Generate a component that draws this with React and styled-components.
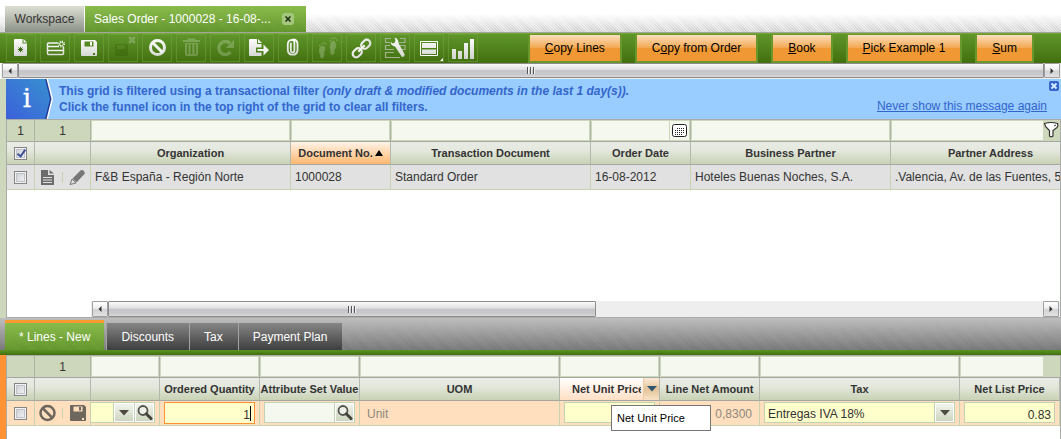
import React from "react";
import styled, { createGlobalStyle, css } from "styled-components";

const GlobalStyle = createGlobalStyle`
  *, *::before, *::after { box-sizing: border-box; }
  body { margin: 0; background: #fff; }
  body, button, input, select { font-family: "Liberation Sans", Arial, sans-serif; font-size: 12px; }
  button, input, select { margin: 0; padding: 0; border: 0; border-radius: 0; color: inherit; }
`;

const hatch = (a, b) => `repeating-linear-gradient(45deg, ${a} 0 1px, ${b} 1px 2px)`;

const Page = styled.div`
  display: flex;
  flex-direction: column;
  min-height: 100vh;
  overflow: hidden;
  color: #333;
`;

/* ---------- window tabs ---------- */
const WindowTabs = styled.nav`
  display: flex;
  align-items: flex-end;
  gap: 1px;
  height: 33px;
  padding-left: 5px;
  border-bottom: 1px solid #a0a4a4;
  background: linear-gradient(#fff 14px, rgba(255, 255, 255, 0.3)), ${hatch("#b8b8b8", "#dcdcdc")};
`;

const WorkspaceTab = styled.button`
  height: 26px;
  width: 79px;
  background: linear-gradient(#dcdfd4, #8d9288);
  color: #333;
`;

const greenTab = `linear-gradient(rgba(139, 189, 76, 0.95), rgba(96, 146, 42, 0.7)), ${hatch("#659738", "#7aae42")}`;

const DocumentTab = styled.div`
  display: flex;
  align-items: center;
  justify-content: space-between;
  height: 26px;
  width: 221px;
  padding: 0 12px 0 9px;
  background: ${greenTab};
  color: #fff;
`;

const TabClose = styled.button`
  display: grid;
  place-items: center;
  width: 12px;
  height: 12px;
  border-radius: 3px;
  background: #a4c77d;
  color: #1c2b0c;
`;

/* ---------- toolbar ---------- */
const Toolbar = styled.div`
  display: flex;
  height: 30px;
  padding: 0 27px 0 6px;
  border-top: 1px solid #78a82c;
  background: linear-gradient(#5f962b, #426f0e);
`;

const IconGroup = styled.div`
  display: flex;
  gap: 4px;
`;

const IconButton = styled.button`
  width: 30px;
  height: 28px;
  border: 1px solid rgba(125, 170, 70, 0.45);
  background: transparent;
  svg { display: block; margin: -1px; opacity: ${(p) => (p.disabled ? 0.22 : 1)}; }
`;

const ProcessGroup = styled.div`
  display: flex;
  gap: 13px;
  margin-left: auto;
`;

const ProcessButton = styled.button`
  height: 29px;
  padding: 0 15px;
  border: 2px solid #68982b;
  border-top-width: 1px;
  background:
    linear-gradient(rgba(255, 240, 225, 0.8), rgba(255, 215, 165, 0.25)) 0 0 / 100% 13px no-repeat,
    #ef9834;
  background-clip: padding-box;
  color: #000;
  white-space: nowrap;
`;

/* ---------- scroll bars ---------- */
const ScrollBar = styled.div`
  display: flex;
  height: 16px;
  padding: 0 1px ${(p) => (p.$grid ? 0 : 1)}px;
  margin-left: ${(p) => (p.$grid ? 84 : 1)}px;
  background: #eee;
`;

const metal = css`
  border: 1px solid #8c8c8c;
  background: linear-gradient(#fafafa, #dedee0 45%, #c6c6ca 50%, #c9c9cd 80%, #dadada);
`;

const ScrollArrow = styled.button`
  ${metal}
  display: grid;
  place-items: center;
  flex: none;
  width: 16px;
  border-color: #a0a0a0;
  border-radius: 1px;
  background: linear-gradient(#fff, #eee 45%, #d2d2d6 55%, #e2e2e2);
`;

const ScrollTrack = styled.div`
  flex: 1;
  display: flex;
`;

const ScrollThumb = styled.div`
  ${metal}
  flex: 0 0 ${(p) => p.$size};
  display: flex;
  align-items: center;
  justify-content: center;
  gap: 1px;
  border-radius: 1px;
  i { width: 2px; height: 7px; background: linear-gradient(90deg, #555 50%, #f4f4f4 50%); }
`;

/* ---------- message ---------- */
const Frame = styled.section`
  display: flex;
  flex: ${(p) => (p.$grow ? 1 : "none")};
  min-width: 0;
  border-left: 6px solid ${(p) => p.$edge};
`;

const FrameBody = styled.div`
  flex: 1;
  min-width: 0;
`;

const Message = styled.div`
  position: relative;
  display: flex;
  height: 40px;
  background: #99ccff;
  color: #3366cc;
`;

const MessageBadge = styled.svg`
  flex: none;
  display: block;
`;

const MessageText = styled.p`
  flex: 1;
  margin: 4px 0 0 6px;
  font-weight: bold;
  line-height: 16px;
  white-space: nowrap;
`;

const MessageLink = styled.a`
  align-self: flex-end;
  margin: 0 14px 5px 0;
  color: #3366cc;
  line-height: 16px;
`;

const MessageClose = styled.button`
  position: absolute;
  top: 2px;
  right: 2px;
  width: 10px;
  height: 10px;
  background: none;
  svg { display: block; }
`;

/* ---------- grids ---------- */
const GridArea = styled.div`
  position: relative;
  overflow: hidden;
  border: 1px solid #a9aca9;
  border-bottom-width: ${(p) => (p.$open ? 0 : 1)}px;
  height: ${(p) => (p.$open ? "100%" : "auto")};
`;

const GridTable = styled.table`
  table-layout: fixed;
  width: ${(p) => p.$width}px;
  border-collapse: separate;
  border-spacing: 0;
  th, td { padding: 0; overflow: hidden; white-space: nowrap; }
`;

const FilterCell = styled.td`
  height: 22px;
  border-right: 1px solid #aeb3a8;
  border-bottom: 1px solid #a4a8a0;
  background: #cdd7bb;
  text-align: center;
`;

const FilterBox = styled.div`
  display: flex;
  height: 21px;
  padding: 1px;
  gap: 1px;
`;

const FilterInput = styled.input`
  flex: 1;
  min-width: 0;
  background: #f4f8ef;
`;

const CalendarButton = styled.button`
  display: grid;
  place-items: center;
  width: 19px;
  background: #f4f8ef;
`;

const headBack = {
  plain: "linear-gradient(#e9ece6, #e3e7dc 40%, #c8d2b4)",
  sorted: "linear-gradient(#fff3e8, #ffb870)",
  hover: "linear-gradient(#fff, #ffdfc4)",
};

const HeadCell = styled.th`
  height: 23px;
  border-right: 1px solid #b4b8ae;
  border-bottom: 1px solid #a4a8a0;
  background: ${(p) => headBack[p.$kind || "plain"]};
  font-size: 11px;
  font-weight: bold;
  color: #333;
`;

const HeadLabel = styled.div`
  display: flex;
  align-items: center;
  justify-content: center;
  gap: 2px;
  height: 22px;
`;

const HeadMenu = styled.button`
  display: grid;
  place-items: center;
  flex: none;
  width: 16px;
  height: 22px;
  border-left: 1px solid #eecba6;
  background: linear-gradient(#fdebd6, #e2c39a 50%, #f8e2c6);
`;

const HoverLabel = styled.span`
  flex: 1;
  overflow: hidden;
  padding-left: 12px;
  text-align: left;
`;

const DataCell = styled.td`
  height: 25px;
  border-right: 1px solid #c6d2b2;
  border-bottom: 1px solid #c6d2b2;
  background: ${(p) => (p.$editing ? "#ffdfbd" : "#e1e1e1")};
  color: ${(p) => (p.$muted ? "#8c8880" : "#333")};
`;

const CellText = styled.div`
  padding: 0 4px;
  overflow: hidden;
`;

const CellReadOnly = styled.div`
  padding: 2px 7px 0;
  text-align: ${(p) => p.$align || "left"};
`;

const RowTools = styled.div`
  display: flex;
  align-items: center;
  justify-content: space-between;
  padding: 0 4px;
`;

const ToolButton = styled.button`
  width: 18px;
  height: 20px;
  background: none;
  svg { display: block; }
`;

const Divider = styled.span`
  width: 1px;
  height: 11px;
  background: #c6d2b2;
`;

const CheckBox = styled.input.attrs({ type: "checkbox" })`
  appearance: none;
  display: block;
  position: relative;
  width: 13px;
  height: 13px;
  margin: 1px auto 0 7px;
  border: 1px solid #858585;
  background: linear-gradient(135deg, #c6cad0, #f8f8f8);
  box-shadow: inset 0 0 0 1px #f2f2f2, inset 0 0 0 2px #bfc3c8;
  &:checked::after {
    content: "";
    position: absolute;
    left: 4px;
    top: 0;
    width: 5px;
    height: 9px;
    border: solid #3b4f96;
    border-width: 0 2px 2px 0;
    transform: rotate(35deg);
  }
`;

const Field = styled.div`
  display: flex;
  height: ${(p) => (p.$active ? 22 : 21)}px;
  margin: ${(p) => (p.$active ? "0 4px" : "0 4px 1px")};
  margin-left: ${(p) => (p.$flush ? 0 : 4)}px;
  border: 1px solid ${(p) => (p.$active ? "#ff9232" : "#c2d3b4")};
  border-left-width: ${(p) => (p.$flush ? 0 : 1)}px;
  background: ${(p) => (p.$blank ? "#f4f8ef" : "#ffffcc")};
`;

const FieldInput = styled.input`
  flex: 1;
  min-width: 0;
  padding: 4px ${(p) => (p.$typing ? 0 : 3)}px 0 3px;
  background: transparent;
  text-align: right;
  outline: 0;
`;

const Caret = styled.span`
  align-self: center;
  width: 1px;
  height: 15px;
  margin-right: 3px;
  background: #000;
`;

const FieldSelect = styled.select`
  appearance: none;
  flex: 1;
  min-width: 0;
  padding: 2px 3px 0;
  background: transparent;
  outline: 0;
`;

const FieldIcon = styled.button`
  display: grid;
  place-items: center;
  flex: none;
  width: ${(p) => (p.$wide ? 21 : 20)}px;
  border-left: 1px solid #c2d3b4;
  box-shadow: inset 0 0 0 1px #fff;
  background: linear-gradient(#f4f6f0, #cbd3bd);
`;

const FunnelCorner = styled.div`
  position: absolute;
  top: 0;
  right: 0;
  width: 17px;
  height: 21px;
  background: #cdd7bb;
`;

const FunnelButton = styled.button`
  width: 17px;
  height: 21px;
  background: none;
  svg { display: block; }
`;

const EmptyRows = styled.div`
  height: 111px;
  background: #fff;
`;

/* ---------- child tabs ---------- */
const ChildTabs = styled.nav`
  height: 37px;
  padding-bottom: 5px;
  background: linear-gradient(#5c9424, #40700c) 0 100% / 100% 5px no-repeat;
`;

const ChildTabStrip = styled.div`
  display: flex;
  align-items: flex-end;
  height: 32px;
  padding-left: 5px;
  background: linear-gradient(rgba(190, 190, 190, 1), rgba(130, 130, 130, 0.6)), ${hatch("#606060", "#7c7c7c")};
`;

const ChildTab = styled.button`
  height: 27px;
  padding: 0 15px;
  background: linear-gradient(#868686, #3e3e3e);
  box-shadow: inset 1px 0 0 #a4a4a4;
  color: #fff;
  ${(p) =>
    p.$active &&
    css`
      height: 30px;
      padding: 0 14px;
      margin-right: 2px;
      border-top: 3px solid #ff9a30;
      box-shadow: none;
      background: ${greenTab};
    `}
`;

const Tooltip = styled.div`
  position: absolute;
  left: 604px;
  top: 49px;
  width: 100px;
  height: 26px;
  padding: 0 5px;
  border: 1px solid #767676;
  background: #fff;
  color: #000;
  font-size: 11px;
  line-height: 24px;
  white-space: nowrap;
`;

/* ---------- drawings ---------- */
const Ico = ({ children }) => (
  <svg width="30" height="28" viewBox="0 0 30 28" aria-hidden="true">
    <defs>
      <linearGradient id="shine" x1="0" y1="4" x2="0" y2="25" gradientUnits="userSpaceOnUse">
        <stop offset="0" stopColor="#fff" />
        <stop offset="1" stopColor="#cfd3cc" />
      </linearGradient>
    </defs>
    {children}
  </svg>
);
const g = "url(#shine)";
const Star = ({ x, y, r, c }) => (
  <path
    d={`M${x - r} ${y}H${x + r}M${x} ${y - r}V${y + r}M${x - r * 0.75} ${y - r * 0.75}L${x + r * 0.75} ${y + r * 0.75}M${x + r * 0.75} ${y - r * 0.75}L${x - r * 0.75} ${y + r * 0.75}`}
    stroke={c}
    strokeWidth="1"
    fill="none"
  />
);
const floppy = "M8 6H21L23 8V21Q23 22 22 22H8Q7 22 7 21V7Q7 6 8 6ZM10.500 7.500V12.500H19.500V7.500ZM19 19V21H21V19Z";

const toolbarIcons = [
  { name: "New", art: <><path d="M9 5H16.500V9.500H21V21Q21 22 20 22H9Q8 22 8 21V6Q8 5 9 5Z" fill={g} /><path d="M17.500 5L21 8.500H17.500Z" fill={g} /><Star x={14.5} y={15.5} r={2.6} c="#3f6d12" /></> },
  { name: "New in grid", art: <><path d="M18 9H8.500Q7.500 9 7.500 10V19.500Q7.500 20.500 8.500 20.500H22.500Q23.500 20.500 23.500 19.500V13" stroke={g} strokeWidth="1.500" fill="none" /><path d="M8 12.500H19M8 16.500H23" stroke="#f2f4f0" strokeWidth="1.300" /><circle cx="21.500" cy="10" r="1.800" fill="none" stroke="#fff" strokeWidth="0.900" /><circle cx="21.500" cy="10" r="2.900" fill="none" stroke="#fff" strokeWidth="1.200" strokeDasharray="1.100 1.180" /></> },
  { name: "Save", art: <><path d={floppy} fill={g} fillRule="evenodd" /><path d="M16 8H18V11.500H16Z" fill="#fff" /></> },
  { name: "Save and close", off: true, art: <><path d="M8 10H19L20 11V22H7V11ZM9 11V15H17V11Z" fill="#234800" fillRule="evenodd" /><path d="M21 3L27 9M27 3L21 9" stroke="#fff" strokeWidth="2.500" /></> },
  { name: "Undo", art: <><circle cx="15.500" cy="13.500" r="7" fill="none" stroke={g} strokeWidth="3" /><path d="M10.500 8.500L20.500 18.500" stroke="#f2f4f0" strokeWidth="3" /></> },
  { name: "Delete", off: true, art: <><path d="M7 7H24M12.500 7V5.500H18.500V7" stroke="#fff" strokeWidth="1.800" fill="none" /><path d="M9 9H22V20Q22 22 20 22H11Q9 22 9 20ZM11 10V20H12.500V10ZM14.700 10V20H16.300V10ZM18.500 10V20H20V10Z" fill="#fff" fillRule="evenodd" /></> },
  { name: "Refresh", off: true, art: <><path d="M20.500 18A6.500 6.500 0 1 1 20 9.500" stroke="#fff" strokeWidth="3.500" fill="none" /><path d="M24 6V14H16Z" fill="#fff" /></> },
  { name: "Export", art: <><path d="M6 5H13V10H17.500V13.500H12V18.500H17.500V22H6Q5 22 5 21V6Q5 5 6 5Z" fill={g} /><path d="M14 5L18 9H14Z" fill={g} /><path d="M13.500 15H19.500V10.500L25 16L19.500 21.500V17H13.500Z" fill="#f0f2ee" /></> },
  { name: "Attach", art: <path d="M12.800 9.500V16.500A1.800 1.800 0 0 0 16.400 16.500V8.500A2.600 2.600 0 0 0 14 5.900Q9.800 6 9.800 10.500V16.500A4.900 4.900 0 0 0 19.500 16.500V10Q19.500 6 15.500 5.500" stroke={g} strokeWidth="1.800" fill="none" strokeLinecap="round" /> },
  { name: "Audit trail", off: true, art: <><path d="M8 13Q11 10 13 13Q14 16 12 18Q13 22 11 24Q8 25 8 21Q6 16 8 13Z" fill="#fff" /><path d="M19 8Q22 5 23.500 9Q25 13 22.500 16Q23 20 20.500 21Q18 21 18.500 17Q17 12 19 8Z" fill="#fff" /><path d="M7 11.500h1.500M9 9.800h1.500M11.500 9h1.500M13.500 10h1M17.500 6.500h1.500M19 4.500h1.500M21.500 4h2M24 6h1.500" stroke="#fff" strokeWidth="1.600" /></> },
  { name: "Link", art: <g fill="none" stroke={g} strokeWidth="2.200" transform="rotate(-45 15.500 14.500)"><rect x="4.500" y="11" width="10" height="7" rx="3.500" /><rect x="16.500" y="11" width="10" height="7" rx="3.500" /><path d="M11 14.500H20" stroke="#f2f4f0" /></g> },
  { name: "Personalize", art: <><path d="M11 4.500H5.500V8.500H10M20 4.500H25V8.500H19M10 11.500H5.500V15.500H14M20 11.500H25V15.500H22M14 18.500H5.500V23.500H20" stroke="#a3b392" strokeWidth="1.200" fill="none" /><path d="M14.500 3.500Q18.500 4.500 18.500 9L24.500 20Q25 23 22 23L15 12.500Q11 12 10.500 7.500L12.500 9.500L15 8.500L15.500 6Z" fill={g} /></> },
  { name: "Toggle view", art: <><path d="M6.500 7.500H23.500V21.500H6.500Z" fill="none" stroke="#fff" /><path d="M8 9H22V14H8ZM8 15.500H22V20H8Z" fill={g} /><path d="M29 24V27H26Z" fill="#fff" /></> },
  { name: "Statistics", art: <path d="M4 15H8V25H4ZM10 17H14V25H10ZM16 9H20V25H16ZM22 5H26V25H22Z" fill={g} /> },
];

const Down = ({ color = "#4c4c40" }) => (
  <svg width="10" height="6" viewBox="0 0 10 6" aria-hidden="true"><path d="M0 0H10L5 5.500Z" fill={color} /></svg>
);
const Arrow = ({ flip }) => (
  <svg width="6" height="8" viewBox="0 0 6 8" aria-hidden="true"><path d={flip ? "M1.500 1V7L4.500 4Z" : "M4.500 1V7L1.500 4Z"} fill="#333" /></svg>
);
const Search = () => (
  <svg width="17" height="17" viewBox="0 0 17 17" aria-hidden="true">
    <circle cx="7" cy="6.500" r="4.500" fill="#eef0ea" stroke="#55554d" strokeWidth="1.800" />
    <path d="M10.200 9.800L15 14.500" stroke="#44443c" strokeWidth="3" strokeLinecap="round" />
  </svg>
);
const Cross = ({ size = 6 }) => (
  <svg width={size} height={size} viewBox="0 0 6 6" aria-hidden="true"><path d="M0.500 0.500L5.500 5.500M5.500 0.500L0.500 5.500" stroke="currentColor" strokeWidth="1.500" /></svg>
);

const Scroller = ({ grid, size }) => (
  <ScrollBar $grid={grid}>
    <ScrollArrow aria-label="Scroll left"><Arrow /></ScrollArrow>
    <ScrollTrack>
      <ScrollThumb $size={size}><i /><i /><i /></ScrollThumb>
    </ScrollTrack>
    <ScrollArrow aria-label="Scroll right"><Arrow flip /></ScrollArrow>
  </ScrollBar>
);

const Cols = ({ widths }) => (
  <colgroup>{widths.map((w, i) => <col key={i} style={{ width: w }} />)}</colgroup>
);

const orderCols = [28, 56, 200, 100, 200, 100, 200, 200];
const orderHeads = ["Organization", "Document No.", "Transaction Document", "Order Date", "Business Partner", "Partner Address"];
const orderRow = ["F&B España - Región Norte", "1000028", "Standard Order", "16-08-2012", "Hoteles Buenas Noches, S.A.", ".Valencia, Av. de las Fuentes, 5"];

const lineCols = [28, 56, 69, 100, 100, 200, 100, 100, 200, 100];
const lineHeads = ["", "Ordered Quantity", "Attribute Set Value", "UOM", "Net Unit Price", "Line Net Amount", "Tax", "Net List Price"];

const sum = (a) => a.reduce((x, y) => x + y, 0);

export default function App() {
  return (
    <Page>
      <GlobalStyle />
      <WindowTabs>
        <WorkspaceTab>Workspace</WorkspaceTab>
        <DocumentTab>
          <span>Sales Order - 1000028 - 16-08-...</span>
          <TabClose aria-label="Close tab"><Cross /></TabClose>
        </DocumentTab>
      </WindowTabs>

      <Toolbar>
        <IconGroup>
          {toolbarIcons.map((t) => (
            <IconButton key={t.name} aria-label={t.name} disabled={t.off}><Ico>{t.art}</Ico></IconButton>
          ))}
        </IconGroup>
        <ProcessGroup>
          <ProcessButton><u>C</u>opy Lines</ProcessButton>
          <ProcessButton>C<u>o</u>py from Order</ProcessButton>
          <ProcessButton><u>B</u>ook</ProcessButton>
          <ProcessButton><u>P</u>ick Example 1</ProcessButton>
          <ProcessButton><u>S</u>um</ProcessButton>
        </ProcessGroup>
      </Toolbar>

      <Scroller size="100%" />

      <Frame $edge="#cdd7bb">
        <FrameBody>
          <Message>
            <MessageBadge width="47" height="40" viewBox="0 0 47 40" aria-hidden="true">
              <defs>
                <linearGradient id="badge" x1="0" y1="1" x2="1" y2="0">
                  <stop offset="0" stopColor="#3b60da" />
                  <stop offset="1" stopColor="#3890d0" />
                </linearGradient>
              </defs>
              <path d="M0 0H42L47 20L42 40H0Z" fill="#fff" />
              <path d="M0 0H40.500L45.500 20L40.500 40H0Z" fill="#1f3a98" />
              <path d="M0 0H39L44 20L39 40H0Z" fill="url(#badge)" />
              <text x="21" y="28" textAnchor="middle" fill="#fff" stroke="#fff" strokeWidth="0.300" fontFamily="DejaVu Serif, serif" fontSize="26">i</text>
            </MessageBadge>
            <MessageText>
              This grid is filtered using a transactional filter <i>(only draft &amp; modified documents in the last 1 day(s)).</i>
              <br />
              Click the funnel icon in the top right of the grid to clear all filters.
            </MessageText>
            <MessageLink href="#hide">Never show this message again</MessageLink>
            <MessageClose aria-label="Close message">
              <svg width="10" height="10" viewBox="0 0 10 10"><rect width="10" height="10" rx="2" fill="#3366cc" /><path d="M2.500 2.500L7.500 7.500M7.500 2.500L2.500 7.500" stroke="#d8ecff" strokeWidth="1.800" /></svg>
            </MessageClose>
          </Message>

          <GridArea>
            <GridTable $width={sum(orderCols)}>
              <Cols widths={orderCols} />
              <thead>
                <tr>
                  <FilterCell>1</FilterCell>
                  <FilterCell>1</FilterCell>
                  {orderHeads.map((h) => (
                    <FilterCell key={h}>
                      <FilterBox>
                        <FilterInput aria-label={`Filter ${h}`} />
                        {h === "Order Date" && (
                          <CalendarButton aria-label="Pick date">
                            <svg width="15" height="13" viewBox="0 0 15 13"><rect x="0.500" y="0.500" width="14" height="12" rx="2" fill="#fff" stroke="#222" /><path d="M5 4.500H13M3 6.500H13M3 8.500H13M3 10.500H11" stroke="#222" strokeDasharray="1 1" /></svg>
                          </CalendarButton>
                        )}
                      </FilterBox>
                    </FilterCell>
                  ))}
                </tr>
                <tr>
                  <HeadCell><CheckBox aria-label="Select all orders" defaultChecked /></HeadCell>
                  <HeadCell />
                  {orderHeads.map((h) => (
                    <HeadCell key={h} $kind={h === "Document No." ? "sorted" : "plain"}>
                      <HeadLabel>
                        {h}
                        {h === "Document No." && <svg width="8" height="6" viewBox="0 0 8 6"><path d="M0 6L4 0L8 6Z" fill="#000" /></svg>}
                      </HeadLabel>
                    </HeadCell>
                  ))}
                </tr>
              </thead>
              <tbody>
                <tr>
                  <DataCell><CheckBox aria-label="Select order 1000028" /></DataCell>
                  <DataCell>
                    <RowTools>
                      <ToolButton aria-label="Open in form">
                        <svg width="18" height="20" viewBox="0 0 18 20"><path d="M2 3H9V8H15V18H2ZM10.500 3L15 6.500H10.500Z" fill="#6c6c6c" /><path d="M4 10.500H13M4 13H13M4 15.500H13" stroke="#e1e1e1" /></svg>
                      </ToolButton>
                      <Divider />
                      <ToolButton aria-label="Edit in grid">
                        <svg width="18" height="20" viewBox="0 0 18 20"><path d="M2 17.500L4 12L8 16Z" fill="none" stroke="#777" /><path d="M4.500 11.500L12.500 3.500Q14 2.500 15.500 3.500L16.500 5Q17.500 6.500 16 7.500L8.500 15.500Z" fill="#777" /></svg>
                      </ToolButton>
                    </RowTools>
                  </DataCell>
                  {orderRow.map((v) => <DataCell key={v}><CellText>{v}</CellText></DataCell>)}
                </tr>
              </tbody>
            </GridTable>
            <FunnelCorner>
              <FunnelButton aria-label="Clear filters">
                <svg width="17" height="21" viewBox="0 0 17 21"><path d="M1.500 3.500Q8 1.500 14.500 3.500Q15.500 6 14 7.500L10 10.500V16Q8 17.500 6.500 16V10.500L2.500 6.500Z" fill="#fff" stroke="#333" strokeWidth="1.200" /><path d="M11 6L13 5" stroke="#333" /></svg>
              </FunnelButton>
            </FunnelCorner>
            <EmptyRows />
            <Scroller grid size="488px" />
          </GridArea>
        </FrameBody>
      </Frame>

      <ChildTabs>
        <ChildTabStrip>
          <ChildTab $active>* Lines - New</ChildTab>
          <ChildTab>Discounts</ChildTab>
          <ChildTab>Tax</ChildTab>
          <ChildTab>Payment Plan</ChildTab>
        </ChildTabStrip>
      </ChildTabs>

      <Frame $edge="#ff9232" $grow>
        <FrameBody>
          <GridArea $open>
            <GridTable $width={sum(lineCols)}>
              <Cols widths={lineCols} />
              <thead>
                <tr>
                  <FilterCell />
                  <FilterCell>1</FilterCell>
                  {lineHeads.map((h) => (
                    <FilterCell key={h}><FilterBox><FilterInput aria-label={`Filter ${h}`} /></FilterBox></FilterCell>
                  ))}
                </tr>
                <tr>
                  <HeadCell><CheckBox aria-label="Select all lines" /></HeadCell>
                  <HeadCell />
                  {lineHeads.map((h) =>
                    h === "Net Unit Price" ? (
                      <HeadCell key={h} $kind="hover">
                        <HeadLabel>
                          <HoverLabel>{h}</HoverLabel>
                          <HeadMenu aria-label="Column menu"><Down color="#2f5670" /></HeadMenu>
                        </HeadLabel>
                      </HeadCell>
                    ) : (
                      <HeadCell key={h}><HeadLabel>{h}</HeadLabel></HeadCell>
                    )
                  )}
                </tr>
              </thead>
              <tbody>
                <tr>
                  <DataCell $editing><CheckBox aria-label="Select line" /></DataCell>
                  <DataCell $editing>
                    <RowTools>
                      <ToolButton aria-label="Cancel edit">
                        <svg width="18" height="20" viewBox="0 0 18 20"><circle cx="8.500" cy="10" r="7" fill="none" stroke="#6e675e" strokeWidth="2.500" /><path d="M3.500 5L13.500 15" stroke="#6e675e" strokeWidth="2.500" /></svg>
                      </ToolButton>
                      <Divider />
                      <ToolButton aria-label="Save line">
                        <svg width="18" height="20" viewBox="5 4 18 20"><path d={floppy} fill="#6e675e" fillRule="evenodd" /><path d="M16 8H18V11.500H16Z" fill="#6e675e" /></svg>
                      </ToolButton>
                    </RowTools>
                  </DataCell>
                  <DataCell $editing>
                    <Field $flush>
                      <FieldInput aria-label="Product" />
                      <FieldIcon $wide aria-label="Open list"><Down /></FieldIcon>
                      <FieldIcon aria-label="Search product"><Search /></FieldIcon>
                    </Field>
                  </DataCell>
                  <DataCell $editing>
                    <Field $active>
                      <FieldInput $typing aria-label="Ordered Quantity" defaultValue="1" />
                      <Caret />
                    </Field>
                  </DataCell>
                  <DataCell $editing>
                    <Field $blank>
                      <FieldInput aria-label="Attribute Set Value" />
                      <FieldIcon aria-label="Search attributes"><Search /></FieldIcon>
                    </Field>
                  </DataCell>
                  <DataCell $editing $muted><CellReadOnly>Unit</CellReadOnly></DataCell>
                  <DataCell $editing><Field><FieldInput aria-label="Net Unit Price" /></Field></DataCell>
                  <DataCell $editing $muted><CellReadOnly $align="right">0,8300</CellReadOnly></DataCell>
                  <DataCell $editing>
                    <Field>
                      <FieldSelect aria-label="Tax" defaultValue="a"><option value="a">Entregas IVA 18%</option></FieldSelect>
                      <FieldIcon aria-label="Open tax list"><Down /></FieldIcon>
                    </Field>
                  </DataCell>
                  <DataCell $editing><Field><FieldInput aria-label="Net List Price" defaultValue="0.83" /></Field></DataCell>
                </tr>
              </tbody>
            </GridTable>
            <FunnelCorner />
            <Tooltip role="tooltip">Net Unit Price</Tooltip>
          </GridArea>
        </FrameBody>
      </Frame>
    </Page>
  );
}
